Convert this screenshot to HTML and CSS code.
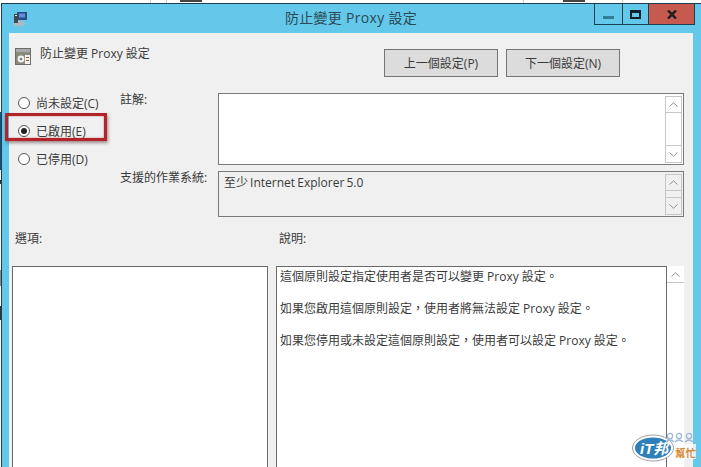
FILE: index.html
```html
<!DOCTYPE html>
<html lang="zh-Hant">
<head>
<meta charset="utf-8">
<title>防止變更 Proxy 設定</title>
<link rel="stylesheet" href="styles.css">
</head>
<body>
<div class="page">
  <div class="backdrop">
    <span class="bd-line bd-a"></span><span class="bd-line bd-b"></span><span class="bd-mark bd-c"></span><span class="bd-line bd-d"></span><span class="bd-mark bd-e"></span><span class="bd-line bd-f"></span>
  </div>
  <div class="window">
    <div class="titlebar">
      <svg class="app-icon" width="15" height="16" viewBox="0 0 15 16">
        <ellipse cx="7" cy="12.5" rx="6" ry="3" fill="#a9bcc4"/>
        <rect x="5" y="1" width="10" height="8" fill="#2c4a86"/>
        <rect x="7" y="2.5" width="6" height="4" fill="#5f8fd6"/>
        <rect x="2" y="3" width="4" height="9" fill="#3d4a52"/>
        <rect x="3" y="4" width="2" height="1" fill="#d7e3ea"/>
      </svg>
      <div class="title">防止變更 Proxy 設定</div>
      <div class="controls">
        <div class="ctl ctl-min"><span class="min-bar"></span></div>
        <div class="ctl ctl-max"><span class="max-box"></span></div>
        <div class="ctl ctl-close">
          <svg width="10" height="9" viewBox="0 0 10 9"><path d="M1 .5 L9 8.5 M9 .5 L1 8.5" stroke="#1d1d1d" stroke-width="2.4" fill="none"/></svg>
        </div>
      </div>
    </div>
    <div class="client">
      <header class="head">
        <div class="head-name">
          <svg width="16" height="17" viewBox="0 0 16 17">
            <rect x="0" y="0" width="16" height="17" fill="#6d6d6d"/>
            <rect x="1" y="1" width="14" height="3" fill="#a9a9a9"/>
            <rect x="1" y="4" width="14" height="12" fill="#8a8a7a"/>
            <circle cx="6" cy="11" r="3.4" fill="#f3f3f3"/>
            <circle cx="6" cy="11" r="1.3" fill="#7a7a7a"/>
            <rect x="10" y="7" width="5" height="9" fill="#f2f2f2"/>
            <rect x="11" y="9" width="3" height="1" fill="#8c5a2e"/>
            <rect x="11" y="12" width="3" height="1" fill="#8c5a2e"/>
          </svg>
          <span class="head-text">防止變更 Proxy 設定</span>
        </div>
        <div class="head-buttons">
          <button class="btn" type="button">上一個設定(P)</button>
          <button class="btn" type="button">下一個設定(N)</button>
        </div>
      </header>
      <section class="config">
        <div class="radios">
          <div class="radio-row"><span class="radio"></span>尚未設定(C)</div>
          <div class="radio-row"><span class="radio radio-on"></span>已啟用(E)</div>
          <div class="radio-row"><span class="radio"></span>已停用(D)</div>
          <div class="highlight"></div>
        </div>
        <div class="fields">
          <div class="field-label">註解:</div>
          <div class="box box-comment">
            <div class="box-body"></div>
            <div class="scroll scroll-inset">
              <div class="sb-btn"><svg width="9" height="5" viewBox="0 0 9 5"><path d="M.5 4.5 L4.5 .8 L8.5 4.5" class="chev"/></svg></div>
              <div class="sb-track"></div>
              <div class="sb-btn"><svg width="9" height="5" viewBox="0 0 9 5"><path d="M.5 .5 L4.5 4.2 L8.5 .5" class="chev"/></svg></div>
            </div>
          </div>
          <div class="field-label">支援的作業系統:</div>
          <div class="box box-os">
            <div class="box-body os-text">至少 Internet Explorer 5.0</div>
            <div class="scroll scroll-inset scroll-grey">
              <div class="sb-btn"><svg width="9" height="5" viewBox="0 0 9 5"><path d="M.5 4.5 L4.5 .8 L8.5 4.5" class="chev"/></svg></div>
              <div class="sb-track"></div>
              <div class="sb-btn"><svg width="9" height="5" viewBox="0 0 9 5"><path d="M.5 .5 L4.5 4.2 L8.5 .5" class="chev"/></svg></div>
            </div>
          </div>
        </div>
      </section>
      <section class="lower">
        <div class="lower-label">選項:</div>
        <div class="lower-label">說明:</div>
        <div class="box-options"></div>
        <div class="desc-wrap">
          <div class="box-desc">
            <p>這個原則設定指定使用者是否可以變更 Proxy 設定。</p>
            <p>如果您啟用這個原則設定，使用者將無法設定 Proxy 設定。</p>
            <p>如果您停用或未設定這個原則設定，使用者可以設定 Proxy 設定。</p>
          </div>
          <div class="scroll scroll-desc">
            <div class="sb-btn"><svg width="9" height="5" viewBox="0 0 9 5"><path d="M.5 4.5 L4.5 .8 L8.5 4.5" class="chev"/></svg></div>
            <div class="sb-track"></div>
          </div>
        </div>
      </section>
    </div>
  </div>
  <svg class="logo" width="64" height="32" viewBox="0 0 64 32">
    <ellipse cx="21" cy="17" rx="20.5" ry="13" fill="#fff" stroke="#9aa3a8"/>
    <ellipse cx="21" cy="17" rx="18" ry="10.5" fill="#2f7fb8"/>
    <text x="8" y="23" class="logo-it">iT邦</text>
    <g fill="none" stroke="#9db7d8" stroke-width="1.2">
      <circle cx="38" cy="5" r="2.6"/><circle cx="47" cy="5" r="2.6"/><circle cx="57" cy="5" r="2.6"/>
      <path d="M34 11 q4 -4 8 0 M43 11 q4 -4 8 0 M53 11 q4 -4 8 0"/>
    </g>
    <rect x="42" y="13" width="22" height="15" fill="#fff" opacity=".75"/>
    <text x="43" y="26" class="logo-help">幫忙</text>
  </svg>
</div>
</body>
</html>
```
FILE: styles.css
```css
* { box-sizing: border-box; }
html, body { margin: 0; padding: 0; }
body {
  font-family: "Open Sans", "Noto Sans CJK TC", sans-serif;
  font-size: 12px;
  color: #3a3a3a;
  background: #fff;
}
.page {
  position: relative;
  width: 701px;
  height: 467px;
  overflow: hidden;
  display: flex;
  flex-direction: column;
  background: #fff linear-gradient(to bottom,
    #fff 0 112px, #1d4f86 112px 170px, #fff 170px 180px, #333 180px 184px, #fff 184px 270px,
    #888 270px 286px, #fff 286px 306px, #333 306px 320px, #fff 320px 467px) no-repeat 0 0 / 1px 100%;
}
.backdrop {
  height: 3px;
  flex: none;
  position: relative;
  overflow: hidden;
}
.bd-line { position: absolute; top: 0; width: 1px; height: 3px; background: #c9c9c9; }
.bd-a { left: 150px; }
.bd-b { left: 166px; }
.bd-d { left: 523px; }
.bd-f { left: 622px; }
.bd-mark { position: absolute; top: 0; height: 2px; background: #444; }
.bd-c { left: 180px; width: 22px; }
.bd-e { left: 563px; width: 22px; }

.window {
  flex: 1;
  min-height: 0;
  margin-left: 1px;
  padding: 0 8px 0 7px;
  background: #63c8ea;
  border-top: 1px solid #17414f;
  border-left: 1px solid #17414f;
  display: flex;
  flex-direction: column;
}
.titlebar {
  flex: none;
  height: 29px;
  position: relative;
  display: flex;
  align-items: center;
  justify-content: center;
}
.app-icon { position: absolute; left: 3px; top: 7px; }
.title { font-size: 14px; line-height: 20px; color: #2c4a56; letter-spacing: .3px; margin-top: -2px; }
.controls {
  position: absolute;
  top: 0;
  left: 585px;
  display: flex;
  height: 21px;
  border: 1px solid #17414f;
  border-top: 0;
}
.ctl { height: 100%; display: flex; align-items: center; justify-content: center; }
.ctl-min { width: 28px; border-right: 1px solid #17414f; }
.ctl-max { width: 26px; border-right: 1px solid #17414f; }
.ctl-close { width: 45px; background: #c75a4e; }
.min-bar { width: 11px; height: 3px; margin-top: 6px; background: #2f7f96; }
.max-box { width: 11px; height: 9px; border: 2px solid #13202a; border-top-width: 3px; }

.client {
  flex: 1;
  min-height: 0;
  background: #f0f0f0;
  display: flex;
  flex-direction: column;
}
.head {
  flex: none;
  height: 56px;
  display: flex;
  justify-content: space-between;
  align-items: flex-start;
  padding: 15px 73px 0 6px;
}
.head-name { display: flex; align-items: flex-start; gap: 9px; }
.head-text { line-height: 12px; }
.head-buttons { display: flex; gap: 8px; padding-top: 1px; }
.btn {
  width: 114px;
  height: 28px;
  padding: 0;
  font: inherit;
  color: #3a3a3a;
  background: #dcdcdc;
  border: 1px solid #757575;
}
.config { flex: none; height: 128px; display: flex; }
.radios {
  position: relative;
  flex: none;
  width: 111px;
  padding-left: 9px;
}
.radio-row { height: 28px; display: flex; align-items: center; gap: 6px; }
.radio {
  width: 12px;
  height: 12px;
  border-radius: 50%;
  border: 1px solid #555;
  background: #fff;
  display: flex;
  align-items: center;
  justify-content: center;
}
.radio-on::after {
  content: "";
  width: 6px;
  height: 6px;
  border-radius: 50%;
  background: #222;
}
.highlight {
  position: absolute;
  left: -4px;
  top: 24px;
  width: 102px;
  height: 28px;
  border: 3px solid #b3242a;
  box-shadow: 1px 2px 3px rgba(90, 60, 60, .55), inset 0 0 2px rgba(179, 36, 42, .6);
}
.fields {
  flex: 1;
  display: grid;
  grid-template-columns: 98px 466px;
  grid-template-rows: 72px 46px;
  row-gap: 6px;
  padding-top: 4px;
}
.field-label { line-height: 16px; margin-top: -1px; }
.box {
  display: flex;
  border: 1px solid #7a7a7a;
  padding-right: 1px;
}
.box-comment { background: #fff; }
.box-os { background: #f0f0f0; }
.box-body { flex: 1; }
.os-text { padding: 3px 0 0 5px; line-height: 16px; word-spacing: -1px; }
.scroll { flex: none; display: flex; flex-direction: column; width: 17px; background: #fff; }
.scroll-inset { margin: 2px 0 1px; border: 1px solid #c6c6c6; }
.scroll-grey { background: #f0f0f0; }
.sb-btn {
  flex: none;
  height: 15px;
  display: flex;
  align-items: center;
  justify-content: center;
}
.sb-track { flex: 1; border-top: 1px solid #c6c6c6; }
.sb-track + .sb-btn { height: 17px; border-top: 1px solid #c6c6c6; }
.chev { fill: none; stroke: #8e8e8e; stroke-width: 1; }

.lower {
  flex: 1;
  min-height: 0;
  display: grid;
  grid-template-columns: 264px 408px;
  grid-template-rows: 49px 1fr;
  padding-left: 3px;
}
.lower-label { padding: 14px 0 0 3px; line-height: 16px; }
.box-options { width: 256px; background: #fff; border: 1px solid #6a6a6a; border-bottom: 0; }
.desc-wrap { display: flex; min-height: 0; }
.box-desc {
  flex: 1;
  background: #fff;
  border: 1px solid #6a6a6a;
  border-bottom: 0;
  padding: 2px 0 0 3px;
  line-height: 16px;
}
.box-desc p { margin: 0 0 16px; white-space: nowrap; }
.scroll-desc { width: 17px; }
.scroll-desc .sb-btn { height: 17px; border-bottom: 1px solid #c6c6c6; }
.scroll-desc .sb-track { border-top: 0; }

.logo { position: absolute; left: 632px; top: 431px; }
.logo-it {
  font-family: "Liberation Sans", "Noto Sans CJK TC", sans-serif;
  font-size: 15px;
  font-weight: 700;
  font-style: italic;
  fill: #fff;
}
.logo-help {
  font-family: "Noto Sans CJK TC", sans-serif;
  font-size: 10.5px;
  font-weight: 700;
  fill: #d98a3a;
}
```
